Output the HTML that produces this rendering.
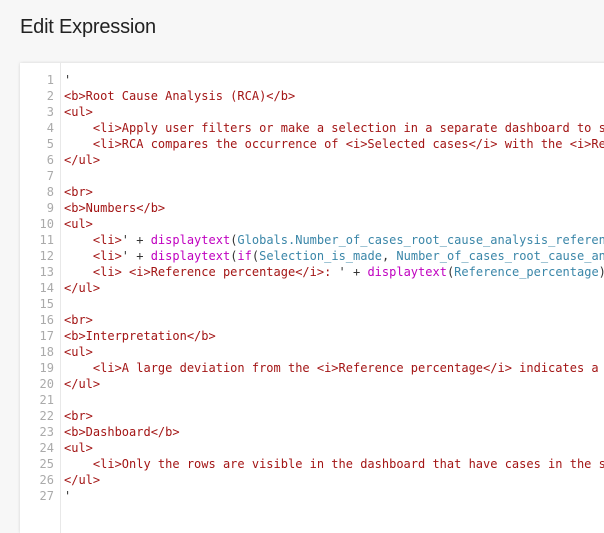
<!DOCTYPE html>
<html><head><style>
body{margin:0;background:#f7f7f7;width:604px;height:519px;overflow:hidden;position:relative;font-family:"Liberation Sans",sans-serif}
h1{position:absolute;left:20px;top:16px;margin:0;font-size:20px;font-weight:normal;color:#222;letter-spacing:-0.2px}
.card{position:absolute;left:20px;top:63px;width:600px;height:470px;background:#fff;box-shadow:0 0 3px rgba(0,0,0,.15)}
.gut{position:absolute;left:0;top:0;width:40px;height:100%;border-right:1px solid #e8e8e8}
pre{position:absolute;left:0;top:9px;margin:0;font-family:"DejaVu Sans Mono",monospace;font-size:12px;line-height:16px;color:#a31515;white-space:pre}
.n{display:inline-block;width:34px;text-align:right;color:#aaa;margin-right:10px}
.k{color:#333}.f{color:#c000c0}.v{color:#3a86a8}
</style></head><body>
<h1>Edit Expression</h1>
<div class="card"><div class="gut"></div>
<pre><span class="n">1</span><span class="k">'</span>
<span class="n">2</span>&lt;b&gt;Root Cause Analysis (RCA)&lt;/b&gt;
<span class="n">3</span>&lt;ul&gt;
<span class="n">4</span>    &lt;li&gt;Apply user filters or make a selection in a separate dashboard to s
<span class="n">5</span>    &lt;li&gt;RCA compares the occurrence of &lt;i&gt;Selected cases&lt;/i&gt; with the &lt;i&gt;Re
<span class="n">6</span>&lt;/ul&gt;
<span class="n">7</span>
<span class="n">8</span>&lt;br&gt;
<span class="n">9</span>&lt;b&gt;Numbers&lt;/b&gt;
<span class="n">10</span>&lt;ul&gt;
<span class="n">11</span>    &lt;li&gt;<span class="k">' + </span><span class="f">displaytext</span><span class="k">(</span><span class="v">Globals.Number_of_cases_root_cause_analysis_referen</span>
<span class="n">12</span>    &lt;li&gt;<span class="k">' + </span><span class="f">displaytext</span><span class="k">(</span><span class="f">if</span><span class="k">(</span><span class="v">Selection_is_made</span><span class="k">, </span><span class="v">Number_of_cases_root_cause_an</span>
<span class="n">13</span>    &lt;li&gt; &lt;i&gt;Reference percentage&lt;/i&gt;: <span class="k">' + </span><span class="f">displaytext</span><span class="k">(</span><span class="v">Reference_percentage</span><span class="k">)</span>
<span class="n">14</span>&lt;/ul&gt;
<span class="n">15</span>
<span class="n">16</span>&lt;br&gt;
<span class="n">17</span>&lt;b&gt;Interpretation&lt;/b&gt;
<span class="n">18</span>&lt;ul&gt;
<span class="n">19</span>    &lt;li&gt;A large deviation from the &lt;i&gt;Reference percentage&lt;/i&gt; indicates a
<span class="n">20</span>&lt;/ul&gt;
<span class="n">21</span>
<span class="n">22</span>&lt;br&gt;
<span class="n">23</span>&lt;b&gt;Dashboard&lt;/b&gt;
<span class="n">24</span>&lt;ul&gt;
<span class="n">25</span>    &lt;li&gt;Only the rows are visible in the dashboard that have cases in the s
<span class="n">26</span>&lt;/ul&gt;
<span class="n">27</span><span class="k">'</span></pre>
</div>
</body></html>
